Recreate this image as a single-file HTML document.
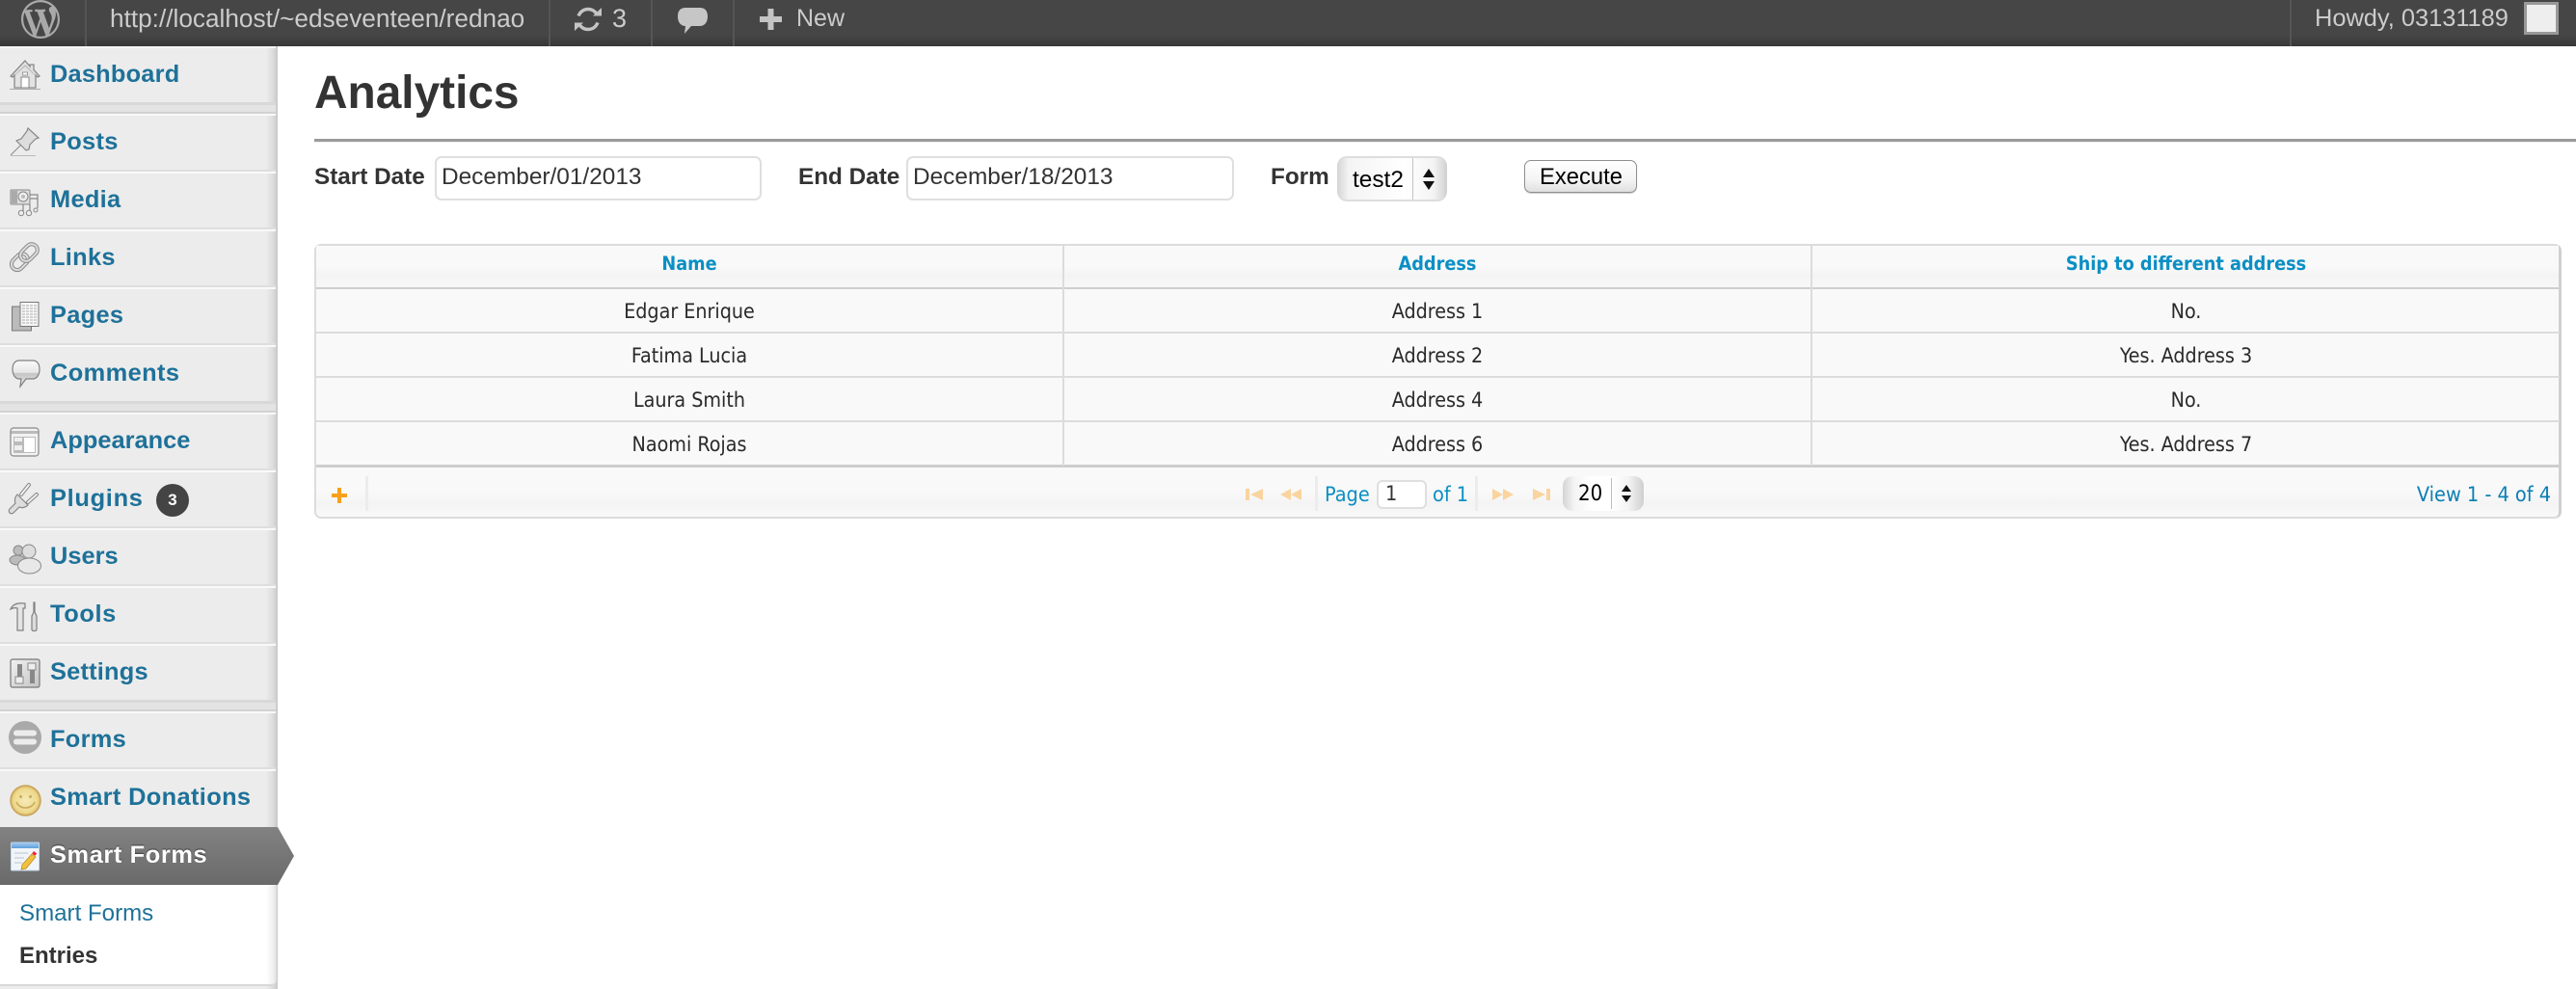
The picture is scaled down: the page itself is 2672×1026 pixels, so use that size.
<!DOCTYPE html>
<html>
<head>
<meta charset="utf-8">
<title>Analytics</title>
<style>
html,body{margin:0;padding:0;background:#fff;width:2672px;height:1026px;overflow:hidden}
body{position:relative;font-family:"Liberation Sans",Arial,sans-serif}
.a{position:absolute}
.t{position:absolute;white-space:nowrap;height:40px;line-height:40px}
.m{font-size:25.4px;font-weight:bold;color:#1e7199;left:52px}
.bar{font-size:26px;color:#ccc}
.sep{position:absolute;top:0;width:2px;height:48px;background:#555}
.ln{position:absolute;left:0;width:286px;height:2px;background:#dedede}
.wh{position:absolute;left:0;width:286px;height:2px;background:#f9f9f9}
.lab{font-size:24.3px;font-weight:bold;color:#333}
.inp{position:absolute;box-sizing:border-box;top:162px;height:46px;background:#fff;border:2px solid #dfdfdf;border-radius:7px}
.val{font-size:24.4px;color:#333}
.g{font-family:"DejaVu Sans Condensed","DejaVu Sans",sans-serif;font-stretch:condensed}
.c{text-align:center;font-size:21.3px;color:#2a2a2a}
.h{text-align:center;font-size:19.7px;font-weight:bold;color:#0b8fc4}
.hl{position:absolute;left:328px;width:2327px;background:#dcdcdc;height:2px}
.vl{position:absolute;top:255px;width:2px;height:228px;background:#dcdcdc}
svg{position:absolute;overflow:visible}
</style>
</head>
<body>

<!-- top bar -->
<div class="a" style="left:0;top:0;width:2672px;height:48px;background:linear-gradient(#464646 0,#464646 36px,#383838 48px)"></div>
<div class="sep" style="left:88px"></div>
<div class="sep" style="left:569px"></div>
<div class="sep" style="left:675px"></div>
<div class="sep" style="left:760px"></div>
<div class="sep" style="left:2375px"></div>
<svg style="left:22px;top:0" width="40" height="40" viewBox="0 0 20 20"><path fill="#a9a9a9" fill-rule="evenodd" d="M20 10c0-5.51-4.49-10-10-10C4.48 0 0 4.49 0 10c0 5.52 4.48 10 10 10 5.51 0 10-4.48 10-10zM7.78 15.37L4.37 6.22c.55-.02 1.17-.08 1.17-.08.5-.06.44-1.13-.06-1.11 0 0-1.45.11-2.37.11-.18 0-.37 0-.58-.01C4.12 2.69 6.87 1.11 10 1.11c2.33 0 4.45.87 6.05 2.34-.68-.11-1.65.39-1.65 1.58 0 .74.45 1.36.9 2.1.35.61.55 1.36.55 2.46 0 1.49-1.4 5-1.4 5l-3.03-8.37c.54-.02.82-.17.82-.17.5-.05.44-1.25-.06-1.22 0 0-1.44.12-2.38.12-.87 0-2.33-.12-2.33-.12-.5-.03-.56 1.2-.06 1.22l.92.08 1.26 3.41zM17.41 10c.24-.64.74-1.87.43-4.25.7 1.29 1.05 2.71 1.05 4.25 0 3.29-1.73 6.24-4.4 7.78.97-2.59 1.94-5.2 2.92-7.78zM6.1 18.09C3.12 16.65 1.11 13.53 1.11 10c0-1.3.23-2.48.72-3.59C3.25 10.3 4.67 14.2 6.1 18.09zm4.03-6.63l2.58 6.98c-.86.29-1.76.45-2.71.45-.79 0-1.57-.11-2.29-.33.81-2.38 1.62-4.74 2.42-7.1z"/></svg>
<div class="t bar" style="left:114px;top:-1px;font-size:26.2px">http://localhost/~edseventeen/rednao</div>
<svg style="left:595px;top:5px" width="30" height="30" viewBox="0 0 30 30"><g fill="none" stroke="#c4c4c4" stroke-width="3.4"><path d="M5 11.5C7 6.5 11 4.5 15 4.5c4 0 7 2 9 5"/><path d="M25 18.5C23 23.5 19 25.5 15 25.5c-4 0-7-2-9-5"/></g><path fill="#c4c4c4" d="M20 11.5h9V3zM10 18.500H1V27z"/></svg>
<div class="t bar" style="left:635px;top:-1px;font-size:27px">3</div>
<svg style="left:703px;top:8px" width="31" height="28" viewBox="0 0 31 28"><path fill="#c6c6c6" d="M8 0h15c5 0 8 3 8 9s-3 10-8 10h-9L7 27l1-8C3 19 0 15 0 9s3-9 8-9z"/></svg>
<svg style="left:788px;top:8px" width="23" height="24" viewBox="0 0 23 24"><path fill="#c4c4c4" d="M8.500 1h6v8H23v6h-8.500v8h-6v-8H0V9h8.500z"/></svg>
<div class="t bar" style="left:826px;top:-1px;font-size:25px">New</div>
<div class="t bar" style="left:2401px;top:-1px;font-size:25.4px">Howdy, 03131189</div>
<div class="a" style="left:2618px;top:2px;width:36px;height:34px;box-sizing:border-box;border:3px solid #999;background:#eee"></div>

<!-- sidebar -->
<div class="a" style="left:0;top:48px;width:288px;height:978px;background:linear-gradient(90deg,#ececec 0,#ececec 276px,#dcdcdc 283px,#c8c8c8 288px)"></div>
<div class="a" style="left:0;top:48px;width:286px;height:2px;background:#f6f6f6"></div>

<!-- group sep 1 -->
<div class="a" style="left:0;top:106px;width:286px;height:12px;background:#e3e3e3;border-top:3px solid #d8d8d8;border-bottom:2px solid #d2d2d2;box-sizing:border-box"></div>
<div class="wh" style="top:118px"></div>
<div class="ln" style="top:176px"></div><div class="wh" style="top:178px"></div>
<div class="ln" style="top:236px"></div><div class="wh" style="top:238px"></div>
<div class="ln" style="top:296px"></div><div class="wh" style="top:298px"></div>
<div class="ln" style="top:356px"></div><div class="wh" style="top:358px"></div>
<!-- group sep 2 -->
<div class="a" style="left:0;top:416px;width:286px;height:12px;background:#e3e3e3;border-top:3px solid #d8d8d8;border-bottom:2px solid #d2d2d2;box-sizing:border-box"></div>
<div class="wh" style="top:428px"></div>
<div class="ln" style="top:486px"></div><div class="wh" style="top:488px"></div>
<div class="ln" style="top:546px"></div><div class="wh" style="top:548px"></div>
<div class="ln" style="top:606px"></div><div class="wh" style="top:608px"></div>
<div class="ln" style="top:666px"></div><div class="wh" style="top:668px"></div>
<!-- group sep 3 -->
<div class="a" style="left:0;top:726px;width:286px;height:12px;background:#e3e3e3;border-top:3px solid #d8d8d8;border-bottom:2px solid #d2d2d2;box-sizing:border-box"></div>
<div class="wh" style="top:738px"></div>
<div class="ln" style="top:796px"></div><div class="wh" style="top:798px"></div>

<div class="t m" style="top:57px;letter-spacing:.2px">Dashboard</div>
<div class="t m" style="top:127px;letter-spacing:.3px">Posts</div>
<div class="t m" style="top:187px;letter-spacing:.3px">Media</div>
<div class="t m" style="top:247px;letter-spacing:.3px">Links</div>
<div class="t m" style="top:307px;letter-spacing:.3px">Pages</div>
<div class="t m" style="top:367px;letter-spacing:.4px">Comments</div>
<div class="t m" style="top:437px">Appearance</div>
<div class="t m" style="top:497px;letter-spacing:.7px">Plugins</div>
<div class="t m" style="top:557px">Users</div>
<div class="t m" style="top:617px;letter-spacing:.6px">Tools</div>
<div class="t m" style="top:677px;letter-spacing:.2px">Settings</div>
<div class="t m" style="top:747px;letter-spacing:.3px">Forms</div>
<div class="t m" style="top:807px;letter-spacing:.35px">Smart Donations</div>

<!-- badge -->
<div class="a" style="left:162px;top:502px;width:34px;height:34px;border-radius:50%;background:#444;color:#fff;font-size:17px;font-weight:bold;text-align:center;line-height:34px">3</div>

<!-- icons -->
<!-- dashboard -->
<svg style="left:9px;top:62px" width="34" height="32" viewBox="0 0 34 32"><path fill="#e2e2e2" stroke="#8a8a8a" stroke-width="1.300" d="M17 1L2 17l2 1 2-2v13h22V16l2 2 2-1-6-6.500V5h-4v2z"/><path fill="#bbb" d="M17 5L7 15v1l10-9 10 9v-1z"/><rect x="13" y="18" width="8" height="11" fill="#fff" stroke="#888"/><rect x="14.500" y="13" width="5" height="3" fill="#fff" stroke="#999"/><path stroke="#aaa" d="M1 30.500h32"/></svg>
<!-- posts -->
<svg style="left:9px;top:132px" width="34" height="30" viewBox="0 0 34 30"><path fill="none" stroke="#888" d="M13 18L2 29"/><path fill="#ddd" stroke="#888" stroke-width="1.200" d="M19 4l1-3 11 10-3 1-6 6-1 5-3 1L8 14l5-2 6-8z"/><path stroke="#bbb" d="M2 29.500h26"/></svg>
<!-- media -->
<svg style="left:9px;top:194px" width="32" height="32" viewBox="0 0 32 32"><rect x="2" y="3" width="20" height="15" rx="1" fill="#dcdcdc" stroke="#888"/><circle cx="15" cy="10" r="5" fill="#eee" stroke="#888"/><circle cx="15" cy="10" r="2" fill="#bbb"/><rect x="3" y="4" width="6" height="13" fill="#aaa"/><path fill="none" stroke="#888" stroke-width="1.200" d="M22 8h8v14M22 12h8M15 18v9M22 18v9"/><circle cx="13" cy="27" r="2.700" fill="#eee" stroke="#888"/><circle cx="21" cy="27" r="2.700" fill="#eee" stroke="#888"/><circle cx="28" cy="24" r="2" fill="#eee" stroke="#888"/></svg>
<!-- links -->
<svg style="left:8px;top:250px" width="34" height="34" viewBox="0 0 34 34"><g fill="none" transform="rotate(-45 17 17)"><rect x="1" y="11" width="19" height="12" rx="6" stroke="#888" stroke-width="4"/><rect x="1" y="11" width="19" height="12" rx="6" stroke="#ddd" stroke-width="2"/><rect x="14" y="11" width="20" height="12" rx="6" stroke="#888" stroke-width="4"/><rect x="14" y="11" width="20" height="12" rx="6" stroke="#ddd" stroke-width="2"/></g></svg>
<!-- pages -->
<svg style="left:12px;top:313px" width="29" height="31" viewBox="0 0 29 31"><rect x="0.500" y="5" width="20" height="25" fill="#bbb" stroke="#777"/><rect x="9" y="0.500" width="19" height="25" fill="#f6f6f6" stroke="#777"/><path stroke="#bbb" stroke-width="1.200" stroke-dasharray="3 1" d="M11 4h15M11 7h15M11 10h15M11 13h15M11 16h15M11 19h15M11 22h15"/></svg>
<!-- comments -->
<svg style="left:12px;top:373px" width="30" height="31" viewBox="0 0 30 31"><defs><linearGradient id="cg" x1="0" y1="0" x2="0" y2="1"><stop offset="0" stop-color="#fafafa"/><stop offset=".45" stop-color="#e8e8e8"/><stop offset=".5" stop-color="#c4c4c4"/><stop offset="1" stop-color="#ededed"/></linearGradient></defs><path fill="url(#cg)" stroke="#808080" stroke-width="1.200" d="M8 1h14c4 0 7 3 7 9s-3 10-7 10h-7l-6 8 1-8H8c-4 0-7-4-7-10s3-9 7-9z"/></svg>
<!-- appearance -->
<svg style="left:10px;top:443px" width="31" height="31" viewBox="0 0 31 31"><rect x="1" y="1" width="29" height="29" rx="3" fill="#f2f2f2" stroke="#888" stroke-width="1.200"/><rect x="1.500" y="4" width="28" height="3" fill="#bbb"/><rect x="4" y="10" width="23" height="17" fill="#bbb"/><rect x="15" y="11" width="11" height="15" fill="#fff"/><rect x="5" y="11" width="8" height="4" fill="#eee"/><rect x="5" y="19" width="8" height="5" fill="#eee"/></svg>
<!-- plugins -->
<svg style="left:8px;top:501px" width="33" height="33" viewBox="0 0 33 33"><path fill="#ddd" stroke="#888" stroke-width="1.200" d="M10 12L21 23c-3 3-7 3-9 2l-6 6c-1 1-3 1-4 0s-1-3 0-4l6-6c-1-2-1-6 2-9z"/><path stroke="#888" stroke-width="4" stroke-linecap="round" d="M14 12L22 2M21 20l9-8"/><path stroke="#eee" stroke-width="2" stroke-linecap="round" d="M14 12L22 2M21 20l9-8"/></svg>
<!-- users -->
<svg style="left:10px;top:563px" width="33" height="33" viewBox="0 0 33 33"><circle cx="9" cy="8" r="5" fill="#bbb" stroke="#888"/><ellipse cx="8" cy="18" rx="8" ry="5" fill="#bbb" stroke="#888"/><circle cx="20" cy="9" r="7" fill="#ddd" stroke="#888"/><ellipse cx="20.500" cy="24" rx="12" ry="8" fill="#e8e8e8" stroke="#888"/></svg>
<!-- tools -->
<svg style="left:10px;top:623px" width="31" height="33" viewBox="0 0 31 33"><path fill="#e4e4e4" stroke="#808080" stroke-width="1.200" d="M1 9c2-5 7-7 15-6v5h-2v23h-6V8C5 7 3 8 1 9z"/><path fill="#ddd" stroke="#808080" stroke-width="1.200" d="M26 2v10l2 4v14c0 2-5 2-5 0V16l2-4V2z"/></svg>
<!-- settings -->
<svg style="left:10px;top:683px" width="32" height="31" viewBox="0 0 32 31"><defs><linearGradient id="sg" x1="0" y1="0" x2="1" y2="1"><stop offset="0" stop-color="#f2f2f2"/><stop offset="1" stop-color="#c4c4c4"/></linearGradient></defs><rect x="1" y="1" width="30" height="29" rx="2" fill="url(#sg)" stroke="#777" stroke-width="1.200"/><rect x="8" y="6" width="5" height="20" fill="#888"/><rect x="21" y="6" width="5" height="20" fill="#888"/><rect x="6" y="19" width="8" height="7" fill="#eee" stroke="#888"/><rect x="19" y="5" width="8" height="7" fill="#eee" stroke="#888"/></svg>
<!-- forms -->
<svg style="left:9px;top:748px" width="34" height="34" viewBox="0 0 34 34"><circle cx="17" cy="17" r="17" fill="#a9a9a9"/><rect x="5" y="9.500" width="24" height="6" rx="3" fill="#ececec"/><rect x="5" y="18.500" width="24" height="6" rx="3" fill="#ececec"/></svg>
<!-- smart donations -->
<svg style="left:10px;top:814px" width="33" height="33" viewBox="0 0 33 33"><defs><radialGradient id="sm"><stop offset="0" stop-color="#f6eab8"/><stop offset=".8" stop-color="#eed98b"/><stop offset="1" stop-color="#d9b566"/></radialGradient></defs><circle cx="16.500" cy="16.500" r="15.500" fill="url(#sm)" stroke="#c9a45a" stroke-width="1.500"/><circle cx="11.500" cy="12.500" r="1.500" fill="#c8ab5d"/><circle cx="21.500" cy="12.500" r="1.500" fill="#c8ab5d"/><path fill="none" stroke="#c8ab5d" stroke-width="1.600" d="M7 18c3 8 16 8 19 0"/></svg>

<!-- active -->
<svg style="left:0;top:858px" width="306" height="60" viewBox="0 0 306 60"><defs><linearGradient id="ac" x1="0" y1="0" x2="0" y2="1"><stop offset="0" stop-color="#828282"/><stop offset="1" stop-color="#6a6a6a"/></linearGradient></defs><path fill="url(#ac)" d="M0 0h288l17 30-17 30H0z"/></svg>
<svg style="left:11px;top:873px" width="30" height="31" viewBox="0 0 30 31"><defs><linearGradient id="bl" x1="0" y1="0" x2="0" y2="1"><stop offset="0" stop-color="#a9cdf0"/><stop offset="1" stop-color="#5e9edc"/></linearGradient></defs><rect x="0.500" y="1" width="29" height="29" rx="1" fill="#f1f5f9" stroke="#c4d8ea"/><rect x="1" y="1" width="28" height="6" fill="url(#bl)"/><path stroke="#d6dce4" stroke-width="2" d="M4 12h14M4 17h10M4 22h8"/><path fill="#f0c040" stroke="#b98a10" stroke-width=".7" d="M22 13l4 3-10 12-5 1 1-5z"/><rect x="23" y="11" width="4" height="3" fill="#e23" transform="rotate(38 25 12)"/></svg>
<div class="t" style="left:52px;top:867px;font-size:25.4px;font-weight:bold;color:#fff;letter-spacing:.6px;text-shadow:0 -1px 1px rgba(0,0,0,.5)">Smart Forms</div>

<!-- submenu -->
<div class="a" style="left:0;top:918px;width:287px;height:105px;background:linear-gradient(90deg,#fff 0,#fff 276px,#eee 284px,#ddd 287px);border-bottom:2px solid #d8d8d8;box-sizing:border-box;border-bottom-right-radius:6px"></div>
<div class="t" style="left:20px;top:928px;font-size:24.1px;color:#1e7199">Smart Forms</div>
<div class="t" style="left:20px;top:972px;font-size:24px;font-weight:bold;color:#333">Entries</div>

<!-- heading -->
<div class="t" style="left:326px;top:77px;font-size:47.8px;font-weight:bold;color:#333">Analytics</div>
<div class="a" style="left:326px;top:144px;width:2346px;height:3px;background:#9b9b9b"></div>
<div class="a" style="left:326px;top:147px;width:2346px;height:1px;background:#eee"></div>

<!-- filters -->
<div class="t lab" style="left:326px;top:164px">Start Date</div>
<div class="inp" style="left:451px;width:339px"></div>
<div class="t val" style="left:458px;top:164px">December/01/2013</div>
<div class="t lab" style="left:828px;top:164px">End Date</div>
<div class="inp" style="left:940px;width:340px"></div>
<div class="t val" style="left:947px;top:164px">December/18/2013</div>
<div class="t lab" style="left:1318px;top:164px">Form</div>

<div class="a" style="left:1387px;top:162px;width:114px;height:47px;box-sizing:border-box;border-radius:10px;background:linear-gradient(90deg,#d4d4d4 0,#f4f4f4 12px,#fff 70px,#f4f4f4 100px,#d0d0d0 114px);border-top:2px solid #ddd;border-bottom:2px solid #ddd"></div>
<div class="a" style="left:1465px;top:164px;width:1px;height:43px;background:#c4c4c4"></div>
<div class="t" style="left:1403px;top:167px;font-size:24.4px;color:#000">test2</div>
<div class="a" style="left:1476px;top:175px;width:0;height:0;border:6px solid transparent;border-top:0;border-bottom:9px solid #111"></div>
<div class="a" style="left:1476px;top:188px;width:0;height:0;border:6px solid transparent;border-bottom:0;border-top:9px solid #111"></div>

<div class="a" style="left:1581px;top:166px;width:117px;height:34px;box-sizing:border-box;border:1.5px solid #8f8f8f;border-radius:7px;background:linear-gradient(#fff 0,#f5f5f5 60%,#e0e0e0 100%);box-shadow:0 1px 1px rgba(0,0,0,.2)"></div>
<div class="t" style="left:1597px;top:164px;font-size:23.8px;color:#000">Execute</div>

<!-- grid -->
<div class="a" style="left:326px;top:253px;width:2331px;height:285px;box-sizing:border-box;border:2px solid #dcdcdc;border-right:3px solid #d0d0d0;border-radius:7px;background:#f9f9f9"></div>
<div class="a" style="left:328px;top:255px;width:2326px;height:43px;background:linear-gradient(#f9f9f9 0,#f9f9f9 50%,#f4f4f4 70%,#f7f7f7 100%)"></div>
<div class="a" style="left:328px;top:298px;width:2326px;height:2px;background:#cecece"></div>
<div class="hl" style="top:344px"></div>
<div class="hl" style="top:390px"></div>
<div class="hl" style="top:436px"></div>
<div class="a" style="left:328px;top:482px;width:2327px;height:3px;background:#cecece"></div>
<div class="a" style="left:328px;top:485px;width:2326px;height:50px;background:linear-gradient(#f9f9f9 0,#f9f9f9 50%,#f4f4f4 75%,#f8f8f8 100%);border-radius:0 0 6px 6px"></div>
<div class="vl" style="left:1102px"></div>
<div class="vl" style="left:1878px"></div>

<div class="t g h" style="left:328px;width:774px;top:254px">Name</div>
<div class="t g h" style="left:1104px;width:774px;top:254px">Address</div>
<div class="t g h" style="left:1880px;width:775px;top:254px">Ship to different address</div>

<div class="t g c" style="left:328px;width:774px;top:304px">Edgar Enrique</div>
<div class="t g c" style="left:1104px;width:774px;top:304px">Address 1</div>
<div class="t g c" style="left:1880px;width:775px;top:304px">No.</div>
<div class="t g c" style="left:328px;width:774px;top:350px">Fatima Lucia</div>
<div class="t g c" style="left:1104px;width:774px;top:350px">Address 2</div>
<div class="t g c" style="left:1880px;width:775px;top:350px">Yes. Address 3</div>
<div class="t g c" style="left:328px;width:774px;top:396px">Laura Smith</div>
<div class="t g c" style="left:1104px;width:774px;top:396px">Address 4</div>
<div class="t g c" style="left:1880px;width:775px;top:396px">No.</div>
<div class="t g c" style="left:328px;width:774px;top:442px">Naomi Rojas</div>
<div class="t g c" style="left:1104px;width:774px;top:442px">Address 6</div>
<div class="t g c" style="left:1880px;width:775px;top:442px">Yes. Address 7</div>

<!-- footer -->
<svg style="left:344px;top:506px" width="16" height="16" viewBox="0 0 16 16"><path fill="#f9a01b" d="M6 0h4v6h6v4h-6v6H6v-6H0V6h6z"/></svg>
<div class="a" style="left:379px;top:494px;width:3px;height:36px;background:#ececec"></div>

<svg style="left:1290px;top:505px" width="64" height="18" viewBox="0 0 64 18"><g fill="#fad49f"><rect x="2" y="2" width="4" height="12"/><path d="M7 8l13-6v12zM38 8l11-6v12zM49 8l11-6v12z"/></g></svg>
<div class="a" style="left:1364px;top:494px;width:3px;height:36px;background:#ececec"></div>
<div class="t g" style="left:1374px;top:494px;font-size:21.5px;color:#0b8fc4">Page</div>
<div class="a" style="left:1428px;top:498px;width:52px;height:30px;box-sizing:border-box;background:#fff;border:2px solid #dfdfdf;border-radius:6px"></div>
<div class="t g" style="left:1437px;top:493px;font-size:21.5px;color:#333">1</div>
<div class="t g" style="left:1486px;top:494px;font-size:21.5px;color:#0b8fc4">of 1</div>
<div class="a" style="left:1530px;top:494px;width:3px;height:36px;background:#ececec"></div>
<svg style="left:1546px;top:505px" width="64" height="18" viewBox="0 0 64 18"><g fill="#fad49f"><path d="M2 2l11 6-11 6zM13 2l11 6-11 6zM44 2l13 6-13 6z"/><rect x="58" y="2" width="4" height="12"/></g></svg>

<div class="a" style="left:1621px;top:494px;width:84px;height:36px;border-radius:10px;background:linear-gradient(90deg,#d4d4d4 0,#f4f4f4 12px,#fff 30px,#fff 50px,#f4f4f4 68px,#cfcfcf 84px)"></div>
<div class="a" style="left:1671px;top:496px;width:1px;height:32px;background:#bbb"></div>
<div class="t g" style="left:1637px;top:493px;font-size:22px;color:#000">20</div>
<div class="a" style="left:1682px;top:503px;width:0;height:0;border:5px solid transparent;border-top:0;border-bottom:7px solid #111"></div>
<div class="a" style="left:1682px;top:514px;width:0;height:0;border:5px solid transparent;border-bottom:0;border-top:7px solid #111"></div>
<div class="t g" style="right:26px;top:494px;font-size:21.5px;color:#0b7fb5">View 1 - 4 of 4</div>

</body>
</html>
